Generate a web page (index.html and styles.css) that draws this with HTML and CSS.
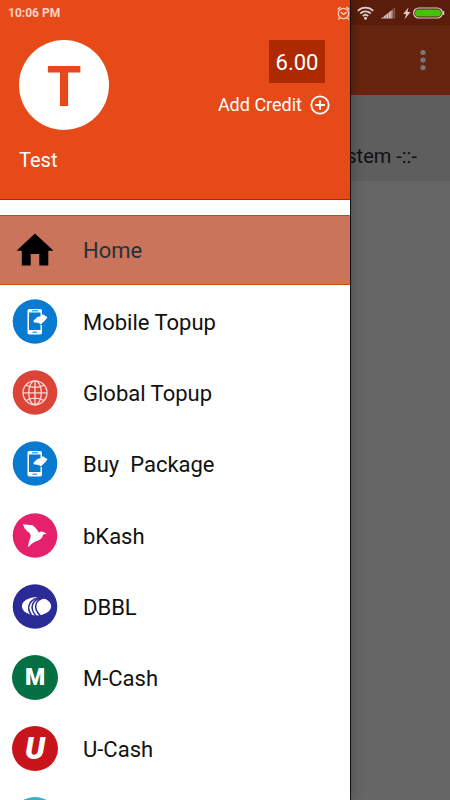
FILE: index.html
```html
<!DOCTYPE html>
<html lang="en">
<head>
<meta charset="utf-8">
<meta name="viewport" content="width=device-width, initial-scale=1">
<title>Home</title>
<link rel="stylesheet" href="styles.css">
</head>
<body>
<svg class="defs" aria-hidden="true">
  <symbol id="phone" viewBox="0 0 45 45">
    <circle cx="22.500" cy="22.500" r="22.300" fill="#087bd1"/>
    <rect x="15" y="10" width="14.500" height="25.500" rx="1.800" fill="#fff"/>
    <rect x="16.500" y="13.500" width="11.500" height="17.500" fill="#087bd1"/>
    <path d="M28 18h2v8h-2z" fill="#087bd1"/>
    <path d="M19.500 11.800h6M20 33.200h4.500" stroke="#087bd1" stroke-width="1"/>
    <path d="M21 21.700l3.800-3.600 3.200-.8 2.500-2 4.500 3-2.500 3.200-4 3.800-2.600-1.200-4.600-.8z" fill="#fff"/>
  </symbol>
</svg>

<main class="screen">
  <header class="app-bar">
    <button class="more" type="button" aria-label="More options">
      <svg viewBox="0 0 6 22" width="6" height="22"><circle cx="3" cy="3.500" r="2.600"/><circle cx="3" cy="11" r="2.600"/><circle cx="3" cy="18.500" r="2.600"/></svg>
    </button>
  </header>
  <section class="notice"><p>stem -::-</p></section>
</main>

<aside class="drawer">
  <header class="profile">
    <div class="identity">
      <div class="avatar">T</div>
      <p class="name">Test</p>
    </div>
    <div class="account">
      <p class="balance">6.00</p>
      <button class="add-credit" type="button">Add Credit
        <svg viewBox="0 0 20 20" width="20" height="20" fill="none" stroke="#fff" stroke-width="1.800"><circle cx="10" cy="10" r="8.700"/><path d="M10 5.200v9.600M5.200 10h9.600"/></svg>
      </button>
    </div>
  </header>
  <nav class="menu">
    <ul class="group">
      <li><a class="item active" href="#"><svg class="icon" viewBox="0 0 45 45"><path d="M22.500 6.500L41 23.700h-5.200V38.500h-9V27h-8.600v11.500H9.300V23.700H4z" fill="#000"/></svg>Home</a></li>
    </ul>
    <ul class="group">
      <li><a class="item" href="#"><svg class="icon"><use href="#phone"/></svg>Mobile Topup</a></li>
      <li><a class="item" href="#"><svg class="icon" viewBox="0 0 45 45"><circle cx="22.500" cy="22.500" r="22.300" fill="#dd4438"/><g fill="none" stroke="#fbd9d5" stroke-width="1.300"><circle cx="22.500" cy="22.800" r="12"/><ellipse cx="22.500" cy="22.800" rx="6.300" ry="12"/><path d="M22.500 10.800v24M10.500 22.800h24M13.500 15c5 3.200 13 3.200 18 0M13.500 30.600c5-3.200 13-3.200 18 0"/></g></svg>Global Topup</a></li>
      <li><a class="item" href="#"><svg class="icon"><use href="#phone"/></svg>Buy&nbsp; Package</a></li>
    </ul>
    <ul class="group">
      <li><a class="item" href="#"><svg class="icon" viewBox="0 0 45 45"><circle cx="22.500" cy="22.500" r="22.300" fill="#e6216b"/><path d="M10.200 11.200l9.800 1c2.600 1.800 4.800 4.200 6.300 7.400 1.500-1.200 3-1.400 4.400-.6l3.600 1.800-3.600.8c-.6 3-2.400 5-5 5.800-2.600.6-6.200 2.500-10.200 6.800.3-4.200 1.800-7.700 2.600-10.200.3-1.800-.4-3.200-1.600-4.800-1.800-.6-2.400-1.400-3-2.800-1.600-.6-1.800-1.400-2-2.600z" fill="#fff"/></svg>bKash</a></li>
      <li><a class="item" href="#"><svg class="icon" viewBox="0 0 45 45"><circle cx="22.500" cy="22.500" r="22.300" fill="#2a2b96"/><ellipse cx="24" cy="22.200" rx="14.600" ry="9.200" fill="#fff"/><g fill="none" stroke="#2a2b96" stroke-width="1.500"><path d="M30 12.800C17 14.500 12.500 23 19.500 32"/><path d="M31 13.200C20 15 16 23 23.500 32"/><path d="M32.500 13.500C23 15.500 19.500 23 28 32"/></g></svg>DBBL</a></li>
      <li><a class="item" href="#"><span class="icon badge mcash" aria-hidden="true">M</span>M-Cash</a></li>
      <li><a class="item" href="#"><span class="icon badge ucash" aria-hidden="true">U</span>U-Cash</a></li>
      <li class="item"><span class="icon badge other"></span></li>
    </ul>
  </nav>
</aside>

<div class="status">
  <time>10:06 PM</time>
  <svg viewBox="0 0 110 20" width="110" height="20" fill="none" aria-hidden="true">
    <g stroke="#ffd3c4" stroke-width="1.300"><circle cx="8.500" cy="10.500" r="5.200"/><path d="M6 9.200l2.500 2.200 3-2M2.500 6.500l3-2.500M14.500 6.500l-3-2.500M4.500 15l-1.200 1.500M12.500 15l1.200 1.500"/></g>
    <g stroke="#dcccc7" stroke-width="1.800"><path d="M22.800 7.800a11 11 0 0 1 15.400 0M25.300 10.500a7.500 7.500 0 0 1 10.400 0M27.800 13a4 4 0 0 1 5.400 0"/></g>
    <circle cx="30.500" cy="15.200" r="1.500" fill="#dcccc7"/>
    <path d="M46 15.500L57.500 6.500v9z" fill="#dcccc7"/>
    <path d="M48.700 15.500v-3M51.200 15.500V9M53.700 15.500V8M56.200 15.500V6" stroke="#5a1d0c" stroke-width=".5"/>
    <path d="M59.200 15.500V5" stroke="#84594d" stroke-width="1.800"/>
    <path d="M73.500 4.500l-5.300 6.500h3L69.500 16.500l6-7.500h-3z" fill="#dcccc7"/>
    <rect x="78.600" y="5" width="28.800" height="10" rx="5" stroke="#dcccc7" stroke-width="1.200"/>
    <rect x="80" y="6.500" width="26" height="7" rx="3.500" fill="#43c40a"/>
    <path d="M108.600 8v4" stroke="#dcccc7" stroke-width="1.200"/>
  </svg>
</div>
</body>
</html>
```

FILE: styles.css
```css
* { box-sizing: border-box; }

body {
  position: relative;
  height: 100vh;
  margin: 0;
  overflow: hidden;
  background: #666;
  color: #111;
  font-family: Roboto, "Liberation Sans", sans-serif;
}

p, ul { margin: 0; padding: 0; }
ul { list-style: none; }
button { border: 0; padding: 0; background: none; color: inherit; font: inherit; }
.defs { position: absolute; width: 0; height: 0; }

.screen { border-top: 25px solid #5a1d0c; }

.app-bar {
  display: flex;
  align-items: center;
  justify-content: flex-end;
  height: 70px;
  padding-right: 24px;
  background: #66250f;
  border-bottom: 1px solid #72200f;
}
.more { display: flex; fill: #777; }

.notice {
  height: 86px;
  padding: 49px 33px 0 0;
  background: #5e5e5e;
  font-size: 20px;
  line-height: 24px;
  text-align: right;
}

.drawer {
  position: absolute;
  top: 0;
  bottom: 0;
  left: 0;
  width: calc(100% - 99px);
  overflow: hidden;
  background: #fff;
  border-right: 1px solid #111;
  box-shadow: 0 0 12px rgba(0, 0, 0, 0.3);
}

.profile {
  display: flex;
  justify-content: space-between;
  height: 200px;
  padding: 40px 20px 0 19px;
  background: #e64a19;
  border-bottom: 1px solid #d8100c;
  color: #fff;
}
.avatar {
  width: 90px;
  height: 90px;
  border-radius: 50%;
  background: #fff;
  color: #e64a19;
  font-size: 56px;
  font-weight: 700;
  line-height: 94px;
  text-align: center;
}
.name { margin-top: 18px; font-size: 20px; line-height: 24px; }

.account { display: flex; flex-direction: column; align-items: flex-end; }
.balance {
  width: 56px;
  height: 43px;
  margin-right: 5px;
  background: #ad2a00;
  font-size: 22px;
  line-height: 45px;
  text-align: center;
}
.add-credit {
  display: flex;
  align-items: center;
  gap: 8px;
  margin-top: 11px;
  font-size: 18px;
  line-height: 22px;
}

.menu { display: flex; flex-direction: column; gap: 2px; padding-top: 15px; }
.group { display: flex; flex-direction: column; gap: 1px; }
.item {
  display: flex;
  align-items: center;
  gap: 25px;
  height: 70px;
  padding: 2px 12px 0;
  color: #111;
  font-size: 22px;
  line-height: 28px;
  text-decoration: none;
}
.active {
  background: #c9745b;
  border-top: 1px solid #b9501c;
  border-bottom: 1px solid #c2500c;
  color: #263238;
}
.icon { flex: none; width: 46px; height: 45px; margin-top: -3px; }
.badge {
  width: 46px;
  border-radius: 50%;
  color: #fff;
  font-weight: 900;
  text-align: center;
}
.mcash { background: #047044; font-size: 23px; line-height: 45px; }
.ucash { background: #c8151b; font-size: 31px; font-style: italic; line-height: 45px; }
.other { background: #35b0c9; }

.status {
  position: absolute;
  top: 0;
  left: 0;
  right: 0;
  display: flex;
  align-items: center;
  justify-content: space-between;
  height: 25px;
  padding: 0 5px 0 8px;
  color: #ffd3c4;
  font-size: 12px;
  font-weight: 700;
}
```
